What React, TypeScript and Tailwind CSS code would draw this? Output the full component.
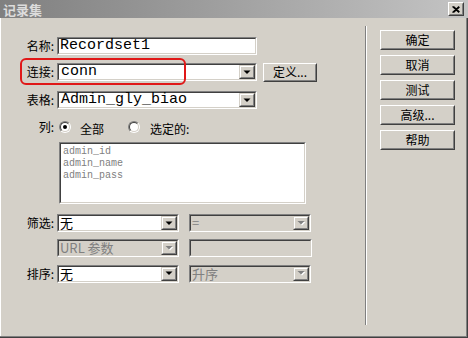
import React from "react";

const CJK = '"Noto Sans CJK SC", "Noto Sans", sans-serif';
const MONO = '"Liberation Mono", "Noto Sans CJK SC", monospace';

function Sunken({
  className,
  inner,
  children,
}: {
  className?: string;
  inner?: string;
  children?: React.ReactNode;
}) {
  return (
    <div
      className={
        "border border-t-[#808080] border-l-[#808080] border-b-white border-r-white " +
        (className || "")
      }
    >
      <div
        className={
          "h-full border border-t-[#404040] border-l-[#404040] border-b-[#d4d0c8] border-r-[#d4d0c8] " +
          (inner || "bg-white")
        }
      >
        {children}
      </div>
    </div>
  );
}

function Arrow({ disabled }: { disabled?: boolean }) {
  return (
    <div className="w-[16px] h-full border border-t-[#d4d0c8] border-l-[#d4d0c8] border-b-[#404040] border-r-[#404040] bg-[#d4d0c8]">
      <div className="w-full h-full border border-t-white border-l-white border-b-[#808080] border-r-[#808080] flex items-center justify-center">
        <svg width="9" height="5" viewBox="0 0 9 5">
          {disabled ? (
            <>
              <polygon points="1.5,1 8.5,1 5,4.5" fill="#ffffff" />
              <polygon points="0.5,0 7.5,0 4,3.5" fill="#808080" />
            </>
          ) : (
            <polygon points="0.5,0.5 7.5,0.5 4,4" fill="#000000" />
          )}
        </svg>
      </div>
    </div>
  );
}

function Select({
  w,
  text,
  mono,
  disabled,
  grayBg,
}: {
  w: string;
  text: string;
  mono?: boolean;
  disabled?: boolean;
  grayBg?: boolean;
}) {
  return (
    <Sunken className={w + " h-[18px]"} inner={grayBg ? "bg-[#d4d0c8]" : "bg-white"}>
      <div className="flex h-full items-stretch">
        <div
          className={
            "flex-1 flex items-center pl-[1px] whitespace-nowrap " +
            (disabled ? "text-[#808080]" : "text-black")
          }
          style={{ fontFamily: mono ? MONO : CJK }}
        >
          <span className={mono ? "text-[15px] leading-[14px] pl-[1px]" : "text-[13px] leading-[14px]"}>{text}</span>
        </div>
        <Arrow disabled={disabled} />
      </div>
    </Sunken>
  );
}

function Label({ text }: { text: string }) {
  return (
    <div className="w-[55px] text-right text-[12px] leading-[14px] text-black pr-[1px]" style={{ fontFamily: CJK }}>
      {text}
    </div>
  );
}

function Radio({ checked }: { checked?: boolean }) {
  return (
    <div className="w-[12px] h-[12px] rounded-full border border-t-[#808080] border-l-[#808080] border-b-white border-r-white">
      <div className="w-full h-full rounded-full border border-t-[#404040] border-l-[#404040] border-b-[#d4d0c8] border-r-[#d4d0c8] bg-white flex items-center justify-center">
        {checked && <div className="w-[4px] h-[4px] rounded-full bg-black" />}
      </div>
    </div>
  );
}

function Button({ text, className }: { text: string; className?: string }) {
  return (
    <div
      className={
        "border border-t-white border-l-white border-b-[#404040] border-r-[#404040] bg-[#d4d0c8] " + (className || "")
      }
    >
      <div
        className="w-full h-full border border-t-[#d4d0c8] border-l-[#d4d0c8] border-b-[#808080] border-r-[#808080] flex items-center justify-center text-[12px] leading-[14px] text-black"
        style={{ fontFamily: CJK }}
      >
        {text}
      </div>
    </div>
  );
}

export default function App() {
  return (
    <div
      className="relative w-[468px] h-[338px] bg-[#d4d0c8] overflow-hidden shadow-[inset_-1px_-1px_#404040,inset_-2px_-2px_#808080,inset_1px_0_#ffffff]"
      style={{ fontFamily: CJK }}
    >
      {/* title bar */}
      <div className="h-[18px] flex items-center justify-between bg-gradient-to-r from-[#808080] to-[#c4c4c4] pl-[3px] pr-[4px]">
        <div className="text-[13px] font-bold leading-[15px] text-[#dcdcdc]" style={{ fontFamily: CJK }}>
          记录集
        </div>
        <div className="w-[16px] h-[14px] border border-t-white border-l-white border-b-[#404040] border-r-[#404040] bg-[#d4d0c8]">
          <div className="w-full h-full border border-t-[#d4d0c8] border-l-[#d4d0c8] border-b-[#808080] border-r-[#808080] flex items-center justify-center">
            <svg width="8" height="7" viewBox="0 0 8 7">
              <path d="M0.5 0.5 L7 6.5 M1.5 0.5 L7.5 6 M7 0.5 L0.5 6.5 M7.5 1 L1.5 6.5" stroke="#000" strokeWidth="1.1" />
            </svg>
          </div>
        </div>
      </div>

      <div className="flex">
        {/* left panel */}
        <div className="w-[365px] pt-[19px] flex flex-col">
          <div className="flex items-center h-[18px]">
            <Label text="名称:" />
            <Sunken className="ml-[2px] w-[200px] h-[18px]">
              <div className="h-full flex items-center pl-[1px] text-[15px] leading-[14px] text-black" style={{ fontFamily: MONO }}>
                Recordset1
              </div>
            </Sunken>
          </div>

          <div className="flex items-center h-[18px] mt-[8px]">
            <Label text="连接:" />
            <div className="ml-[2px]">
              <Select w="w-[200px]" text="conn" mono />
            </div>
            <Button text="定义..." className="ml-[6px] w-[54px] h-[19px]" />
          </div>

          <div className="flex items-center h-[18px] mt-[10px]">
            <Label text="表格:" />
            <div className="ml-[2px]">
              <Select w="w-[200px]" text="Admin_gly_biao" mono />
            </div>
          </div>

          <div className="flex items-center h-[16px] mt-[10px] text-[12px] leading-[14px] text-black">
            <Label text="列:" />
            <div className="ml-[4px]">
              <Radio checked />
            </div>
            <span className="ml-[9px] mt-[4px]">全部</span>
            <div className="ml-[24px]">
              <Radio />
            </div>
            <span className="ml-[10px] mt-[4px]">选定的:</span>
          </div>

          <Sunken className="ml-[59px] mt-[7px] w-[247px] h-[62px]">
            <div className="pt-[2px] pl-[2px] text-[10px] leading-[12px] text-[#808080]" style={{ fontFamily: MONO }}>
              <div>admin_id</div>
              <div>admin_name</div>
              <div>admin_pass</div>
            </div>
          </Sunken>

          <div className="flex items-center h-[18px] mt-[10px]">
            <Label text="筛选:" />
            <div className="ml-[2px]">
              <Select w="w-[122px]" text="无" />
            </div>
            <div className="ml-[10px]">
              <Select w="w-[122px]" text="=" disabled grayBg />
            </div>
          </div>

          <div className="flex items-center h-[18px] mt-[7px]">
            <div className="w-[55px]" />
            <div className="ml-[2px]">
              <Select w="w-[122px]" text="URL 参数" disabled grayBg />
            </div>
            <Sunken className="ml-[10px] w-[123px] h-[18px]" inner="bg-[#d4d0c8]" />
          </div>

          <div className="flex items-center h-[19px] mt-[7px]">
            <Label text="排序:" />
            <div className="ml-[2px]">
              <Select w="w-[122px]" text="无" />
            </div>
            <div className="ml-[10px]">
              <Select w="w-[122px]" text="升序" disabled grayBg />
            </div>
          </div>
        </div>

        {/* separator */}
        <div className="mt-[8px] w-[2px] h-[299px] border-l border-l-[#808080] border-r border-r-white" />

        {/* right buttons */}
        <div className="ml-[13px] pt-[12px] flex flex-col gap-[5px]">
          <Button text="确定" className="w-[75px] h-[20px]" />
          <Button text="取消" className="w-[75px] h-[20px]" />
          <Button text="测试" className="w-[75px] h-[20px]" />
          <Button text="高级..." className="w-[75px] h-[20px]" />
          <Button text="帮助" className="w-[75px] h-[20px]" />
        </div>
      </div>

      {/* red annotation */}
      <div className="absolute left-[20px] top-[58px] w-[166px] h-[27px] border-2 border-[#e01818] rounded-[6px] z-10 pointer-events-none" />
    </div>
  );
}
